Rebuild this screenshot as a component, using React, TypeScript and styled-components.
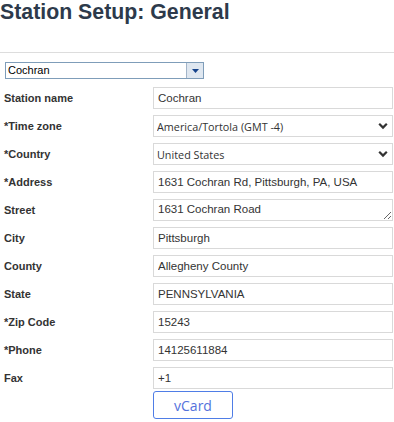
import React from 'react';
import styled, { createGlobalStyle } from 'styled-components';

const GlobalStyle = createGlobalStyle`
  html, body {
    margin: 0;
    padding: 0;
    background: #ffffff;
    font-family: Arial, "Liberation Sans", sans-serif;
  }
`;

interface IField {
  label: string;
  value: string;
  kind?: 'input' | 'select' | 'textarea';
}

const fields: IField[] = [
  { label: 'Station name', value: 'Cochran' },
  { label: '*Time zone', value: 'America/Tortola (GMT -4)', kind: 'select' },
  { label: '*Country', value: 'United States', kind: 'select' },
  { label: '*Address', value: '1631 Cochran Rd, Pittsburgh, PA, USA' },
  { label: 'Street', value: '1631 Cochran Road', kind: 'textarea' },
  { label: 'City', value: 'Pittsburgh' },
  { label: 'County', value: 'Allegheny County' },
  { label: 'State', value: 'PENNSYLVANIA' },
  { label: '*Zip Code', value: '15243' },
  { label: '*Phone', value: '14125611884' },
  { label: 'Fax', value: '+1' },
];

const Chevron = () => (
  <ChevronIcon width='10' height='8' viewBox='0 0 10 8'>
    <path d='M1.2 1.8 L5 5.6 L8.8 1.8' fill='none' stroke='#333' strokeWidth='2.2' />
  </ChevronIcon>
);

const FieldControl = ({ field }: { field: IField }) => {
  if (field.kind === 'select') {
    return (
      <SelectWrap>
        <Select defaultValue={field.value}>
          <option>{field.value}</option>
        </Select>
        <Chevron />
      </SelectWrap>
    );
  }
  if (field.kind === 'textarea') {
    return <TextArea defaultValue={field.value} />;
  }
  return <TextInput defaultValue={field.value} />;
};

const App = () => {
  return (
    <Page>
      <GlobalStyle />
      <Title>Station Setup: General</Title>
      <Divider />
      <Form>
        <Combo>
          <ComboText>Cochran</ComboText>
          <ComboButton>
            <svg width='7' height='4' viewBox='0 0 7 4'>
              <path d='M0 0 H7 L3.5 4 Z' fill='#15428b' />
            </svg>
          </ComboButton>
        </Combo>
        <Grid>
          {fields.map(f => (
            <React.Fragment key={f.label}>
              <Label>{f.label}</Label>
              <FieldControl field={f} />
            </React.Fragment>
          ))}
          <span />
          <VCardButton>vCard</VCardButton>
        </Grid>
      </Form>
    </Page>
  );
};

const Page = styled.div`
  width: 394px;
  height: 422px;
  overflow: hidden;
`;

const Title = styled.h1`
  margin: 0;
  font-size: 21.3px;
  line-height: 24px;
  font-weight: bold;
  color: #2d3a4b;
`;

const Divider = styled.hr`
  margin: 28px 0 0;
  border: none;
  border-top: 1px solid #dddddd;
  height: 0;
`;

const Form = styled.div`
  padding: 9px 0 0 4px;
`;

const Combo = styled.div`
  margin-left: 1px;
  width: 199px;
  height: 17px;
  box-sizing: border-box;
  border: 1px solid #7f9db9;
  display: flex;
  align-items: stretch;
`;

const ComboText = styled.div`
  flex: 1;
  font-size: 11px;
  line-height: 15px;
  padding-left: 2px;
  color: #000;
`;

const ComboButton = styled.div`
  width: 16px;
  border-left: 1px solid #a3b5c9;
  background: #dfe7f0;
  display: flex;
  align-items: center;
  justify-content: center;
`;

const Grid = styled.div`
  margin-top: 8px;
  display: grid;
  grid-template-columns: 149px 240px;
  grid-auto-rows: 22px;
  row-gap: 6px;
  align-items: center;
`;

const Label = styled.div`
  font-size: 11px;
  font-weight: bold;
  color: #333;
`;

const controlBase = `
  box-sizing: border-box;
  width: 240px;
  height: 22px;
  margin: 0;
  border: 1px solid #d9d9d9;
  border-radius: 0;
  background: #fff;
  color: #333;
  font-family: Arial, "Liberation Sans", sans-serif;
  font-size: 11.5px;
  outline: none;
`;

const TextInput = styled.input`
  ${controlBase}
  padding: 0 4px;
`;

const TextArea = styled.textarea`
  ${controlBase}
  padding: 2px 4px 0;
  line-height: 14px;
  resize: vertical;
  overflow: hidden;
`;

const SelectWrap = styled.div`
  position: relative;
  width: 240px;
  height: 22px;
`;

const Select = styled.select`
  ${controlBase}
  appearance: none;
  padding: 0 20px 0 3px;
  font-family: "Open Sans", Arial, sans-serif;
  font-size: 10.8px;
`;

const ChevronIcon = styled.svg`
  position: absolute;
  right: 5px;
  top: 7px;
  pointer-events: none;
`;

const VCardButton = styled.button`
  width: 80px;
  height: 28px;
  margin-top: -2px;
  box-sizing: border-box;
  border: 1px solid #4f7de6;
  border-radius: 3px;
  background: #fff;
  color: #5472dc;
  font-family: "Open Sans", Arial, sans-serif;
  font-size: 14px;
  padding: 0;
`;

export default App;
